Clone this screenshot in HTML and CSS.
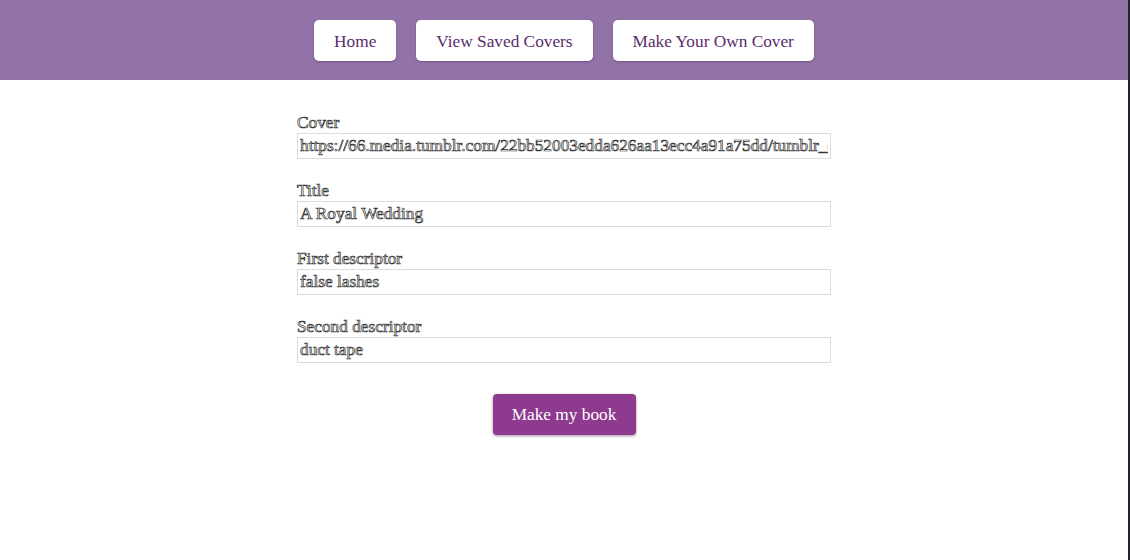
FILE: index.html
```html
<!DOCTYPE html>
<html>
<head>
<meta charset="utf-8">
<link rel="stylesheet" href="styles.css">
</head>
<body>
<div class="page">
  <header class="top">
    <button class="nav-btn">Home</button>
    <button class="nav-btn">View Saved Covers</button>
    <button class="nav-btn">Make Your Own Cover</button>
  </header>
  <main class="form">
    <div class="group">
      <label class="label">Cover</label>
      <input class="field" value="https://66.media.tumblr.com/22bb52003edda626aa13ecc4a91a75dd/tumblr_o5p1whKcdM1uw5mgbo1_500.jpg">
    </div>
    <div class="group">
      <label class="label">Title</label>
      <input class="field" value="A Royal Wedding">
    </div>
    <div class="group">
      <label class="label">First descriptor</label>
      <input class="field" value="false lashes">
    </div>
    <div class="group">
      <label class="label">Second descriptor</label>
      <input class="field" value="duct tape">
    </div>
    <div class="actions">
      <button class="make-btn">Make my book</button>
    </div>
  </main>
</div>
</body>
</html>
```

FILE: styles.css
```css
html, body {
  margin: 0;
  padding: 0;
  background: #ffffff;
}
.page {
  width: 1128px;
  min-height: 560px;
  border-right: 2px solid #23232e;
  font-family: "Liberation Serif", "DejaVu Serif", serif;
}
.top {
  height: 80px;
  background: #9273a8;
  display: flex;
  justify-content: center;
  align-items: center;
  gap: 20px;
}
.nav-btn {
  height: 41px;
  padding: 3px 20px 0;
  background: #ffffff;
  border: none;
  border-radius: 5px;
  font-family: "Liberation Serif", "DejaVu Serif", serif;
  font-size: 17.3px;
  color: #5b2c6b;
  box-shadow: 0 1px 2px rgba(60, 30, 80, 0.35);
}
.form {
  width: 534px;
  margin: 32px auto 0;
}
.group {
  margin-bottom: 21px;
}
.label {
  display: block;
  font-size: 17.3px;
  line-height: 21px;
  color: #ffffff;
  -webkit-text-stroke: 0.7px #333333;
}
.field {
  display: block;
  width: 534px;
  height: 26px;
  box-sizing: border-box;
  border: 1px solid #dcdcdc;
  padding: 0 2px;
  margin: 0;
  font-family: "Liberation Serif", "DejaVu Serif", serif;
  font-size: 17.3px;
  color: #ffffff;
  -webkit-text-stroke: 0.7px #333333;
  outline: none;
}
.actions {
  display: flex;
  justify-content: center;
  padding-top: 10px;
}
.make-btn {
  width: 143px;
  height: 41px;
  background: #8e3a8e;
  color: #ffffff;
  border: none;
  border-radius: 4px;
  font-family: "Liberation Serif", "DejaVu Serif", serif;
  font-size: 17.3px;
  box-shadow: 0 1px 3px rgba(40, 10, 40, 0.45);
}
```
